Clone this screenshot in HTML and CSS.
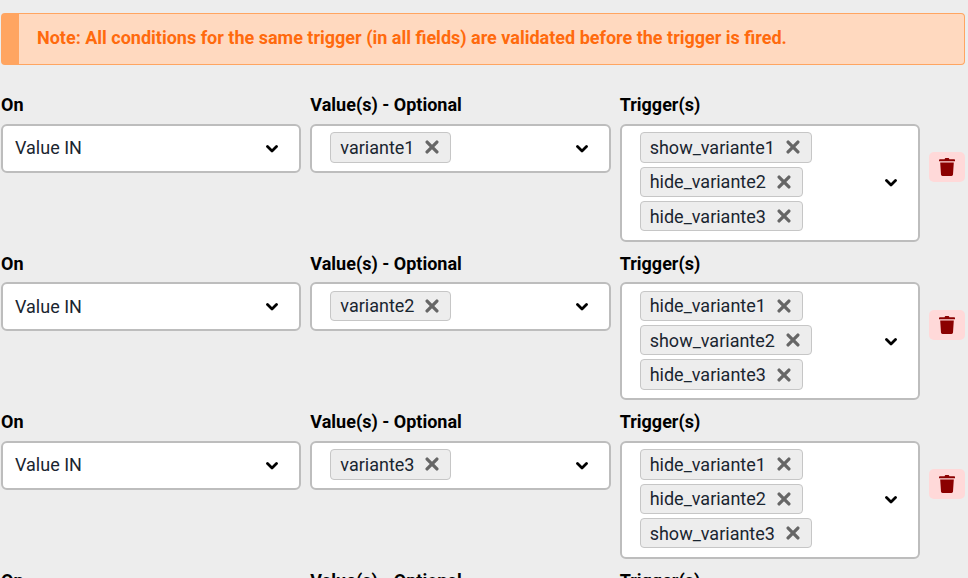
FILE: index.html
```html
<!DOCTYPE html>
<html lang="en">
<head>
<meta charset="utf-8">
<title>Triggers</title>
<link rel="stylesheet" href="styles.css">
</head>
<body>
<svg class="sprites" width="0" height="0" aria-hidden="true">
  <symbol id="chev" viewBox="0 0 12 8"><path d="M1.500 1.500 6 6l4.500-4.500" fill="none" stroke="currentColor" stroke-width="2.800" stroke-linecap="round" stroke-linejoin="round"/></symbol>
  <symbol id="x" viewBox="0 0 12 12"><path d="M1.800 1.800l8.400 8.400M10.200 1.800l-8.400 8.400" fill="none" stroke="currentColor" stroke-width="2.800" stroke-linecap="round"/></symbol>
  <symbol id="trash" viewBox="0 0 16 18"><path d="M5.600 1.200C5.800.5 6.200 0 7 0h2c.8 0 1.200.5 1.400 1.200H15c.6 0 1 .4 1 .9v1.100H0V2.100c0-.5.400-.9 1-.9zM1.200 4.400h13.600l-.8 12.200c-.1.800-.6 1.400-1.500 1.400H3.500c-.9 0-1.400-.6-1.500-1.400z" fill="currentColor"/></symbol>
</svg>
<main class="page">
  <div class="note"><p class="note-text">Note: All conditions for the same trigger (in all fields) are validated before the trigger is fired.</p></div>

  <section class="row">
    <div class="field"><label class="label">On</label>
      <div class="box"><div class="content plain">Value IN</div><svg class="chev"><use href="#chev"/></svg></div></div>
    <div class="field"><label class="label">Value(s) - Optional</label>
      <div class="box"><div class="content"><span class="chip">variante1<svg class="x"><use href="#x"/></svg></span></div><svg class="chev"><use href="#chev"/></svg></div></div>
    <div class="field"><label class="label">Trigger(s)</label>
      <div class="box"><div class="content"><span class="chip">show_variante1<svg class="x"><use href="#x"/></svg></span><span class="chip">hide_variante2<svg class="x"><use href="#x"/></svg></span><span class="chip">hide_variante3<svg class="x"><use href="#x"/></svg></span></div><svg class="chev"><use href="#chev"/></svg></div></div>
    <button class="del" type="button" aria-label="Delete"><svg class="trash"><use href="#trash"/></svg></button>
  </section>

  <section class="row">
    <div class="field"><label class="label">On</label>
      <div class="box"><div class="content plain">Value IN</div><svg class="chev"><use href="#chev"/></svg></div></div>
    <div class="field"><label class="label">Value(s) - Optional</label>
      <div class="box"><div class="content"><span class="chip">variante2<svg class="x"><use href="#x"/></svg></span></div><svg class="chev"><use href="#chev"/></svg></div></div>
    <div class="field"><label class="label">Trigger(s)</label>
      <div class="box"><div class="content"><span class="chip">hide_variante1<svg class="x"><use href="#x"/></svg></span><span class="chip">show_variante2<svg class="x"><use href="#x"/></svg></span><span class="chip">hide_variante3<svg class="x"><use href="#x"/></svg></span></div><svg class="chev"><use href="#chev"/></svg></div></div>
    <button class="del" type="button" aria-label="Delete"><svg class="trash"><use href="#trash"/></svg></button>
  </section>

  <section class="row">
    <div class="field"><label class="label">On</label>
      <div class="box"><div class="content plain">Value IN</div><svg class="chev"><use href="#chev"/></svg></div></div>
    <div class="field"><label class="label">Value(s) - Optional</label>
      <div class="box"><div class="content"><span class="chip">variante3<svg class="x"><use href="#x"/></svg></span></div><svg class="chev"><use href="#chev"/></svg></div></div>
    <div class="field"><label class="label">Trigger(s)</label>
      <div class="box"><div class="content"><span class="chip">hide_variante1<svg class="x"><use href="#x"/></svg></span><span class="chip">hide_variante2<svg class="x"><use href="#x"/></svg></span><span class="chip">show_variante3<svg class="x"><use href="#x"/></svg></span></div><svg class="chev"><use href="#chev"/></svg></div></div>
    <button class="del" type="button" aria-label="Delete"><svg class="trash"><use href="#trash"/></svg></button>
  </section>

  <section class="row">
    <div class="field"><label class="label">On</label></div>
    <div class="field"><label class="label">Value(s) - Optional</label></div>
    <div class="field"><label class="label">Trigger(s)</label></div>
  </section>
</main>
</body>
</html>
```
FILE: styles.css
```css
* { box-sizing: border-box; }
html, body { margin: 0; height: 100%; overflow: hidden; }
body { background: #ededed; font-family: Roboto, "Liberation Sans", sans-serif; color: #1a2530; }
.sprites { position: absolute; }
.page { padding: 13px 3px 0 1px; }
.note {
  height: 52px;
  display: flex;
  align-items: center;
  padding-left: 18px;
  margin-bottom: 28.200px;
  background: #ffd9bf;
  border: 1px solid #ffa561;
  border-left: 18px solid #ffa561;
  border-radius: 4px;
}
.note-text { margin: 0 0 2px; font-size: 18px; font-weight: 700; color: #ff6a0d; line-height: 24px; }
.row { display: flex; align-items: flex-start; gap: 9px; margin-bottom: 10px; }
.field { width: 300.330px; flex: none; }
.label { display: block; font-size: 18px; font-weight: 700; color: #000; line-height: 24px; margin-bottom: 6.700px; }
.box {
  display: flex;
  align-items: center;
  min-height: 49px;
  background: #fff;
  border: 2px solid #bdbdbd;
  border-radius: 6px;
  padding: 6.400px 21px 8.200px 18px;
}
.content { flex: 1; display: flex; flex-direction: column; align-items: flex-start; gap: 4px; min-width: 0; }
.content.plain { margin-left: -6px; padding-top: 0.800px; font-size: 18px; line-height: 29.600px; }
.chip {
  display: inline-flex;
  align-items: center;
  height: 30.400px;
  padding: 0 11px 0 9px;
  background: #ededed;
  border: 1px solid #c6c6c6;
  border-radius: 4px;
  font-size: 18px;
}
.x { width: 14px; height: 14px; margin-left: 11px; color: #666; }
.chev { width: 12px; height: 8px; margin-top: 3px; color: #000; flex: none; }
.del {
  align-self: center;
  flex: none;
  width: 36px;
  height: 30px;
  margin-bottom: 1px;
  padding: 0;
  display: flex;
  align-items: center;
  justify-content: center;
  background: #ffd9d9;
  border: 0;
  border-radius: 5px;
}
.trash { width: 16px; height: 18px; color: #8b0000; }
```
